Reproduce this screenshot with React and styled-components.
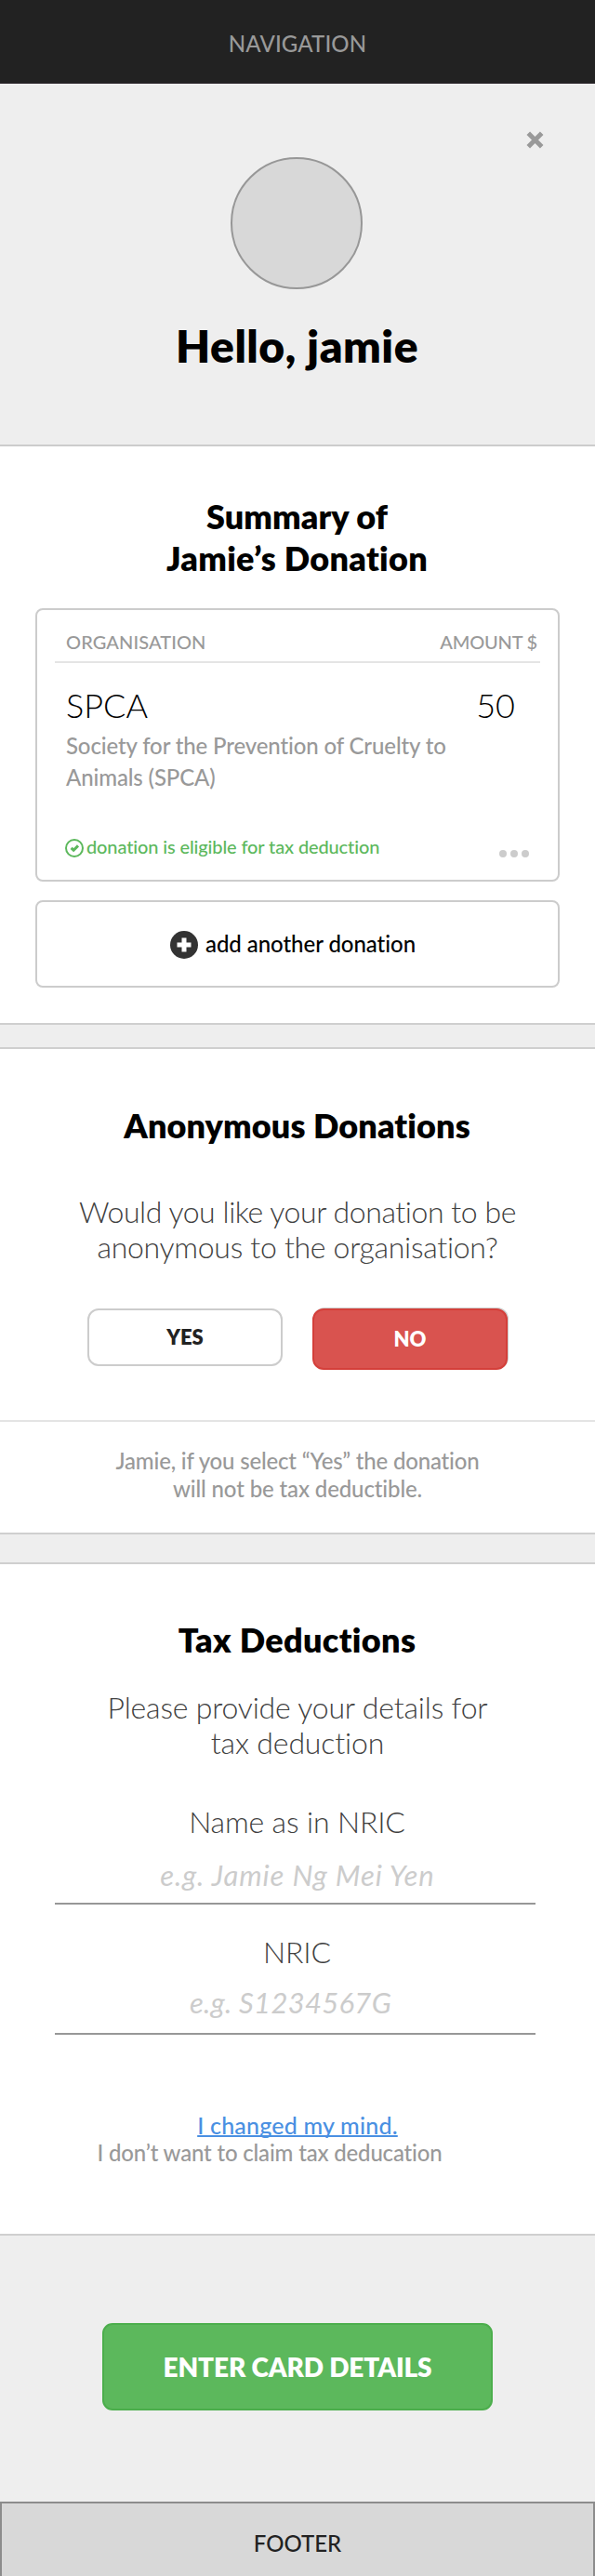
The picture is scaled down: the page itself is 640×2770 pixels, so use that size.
import React from 'react';
import styled, { createGlobalStyle } from 'styled-components';

const GlobalStyle = createGlobalStyle`
  *, *::before, *::after { box-sizing: border-box; }
  body { margin: 0; background: #eee; }
  h1, h2, p { margin: 0; }
  button { font: inherit; cursor: pointer; }
`;

const Page = styled.div`
  width: 640px;
  min-height: 2770px;
  display: flex;
  flex-direction: column;
  background: #eee;
  color: #000;
  font-family: Lato, 'Liberation Sans', sans-serif;
  font-variant-ligatures: none;
  white-space: nowrap;
`;

const Track = styled.span`
  display: block;
  letter-spacing: ${(p) => p.$by || 0}px;
`;

const NavBar = styled.nav`
  height: 90px;
  padding-top: 32px;
  background: #222;
  border-bottom: 1px solid #2a252b;
  color: #999;
  font-size: 24px;
  font-weight: 500;
  line-height: 30px;
  letter-spacing: 0.1px;
  text-align: center;
`;

const Hero = styled.header`
  position: relative;
  display: flex;
  flex-direction: column;
  align-items: center;
  height: 390px;
  padding-top: 79px;
  border-bottom: 2px solid #ccc;
`;

const CloseButton = styled.button`
  position: absolute;
  top: 51px;
  right: 55px;
  display: flex;
  padding: 0;
  border: 0;
  background: none;
`;

const Avatar = styled.div`
  width: 142px;
  height: 142px;
  margin-right: 2px;
  border: 2px solid #979797;
  border-radius: 50%;
  background: #d8d8d8;
`;

const Greeting = styled.h1`
  margin-top: 32px;
  padding-right: 1px;
  font-size: 48px;
  font-weight: 800;
  line-height: 58px;
  letter-spacing: 0.5px;
`;

const Section = styled.section`
  display: flex;
  flex-direction: column;
  align-items: center;
  padding: ${(p) => p.$pad};
  background: #fff;
`;

const Title = styled.h2`
  padding-right: 1px;
  font-size: 36px;
  font-weight: 800;
  line-height: 45px;
  text-align: center;
`;

const Band = styled.div`
  height: ${(p) => p.$height}px;
  border: solid #cfcfcf;
  border-width: 2px 0;
  background: #eee;
`;

const Card = styled.article`
  width: 564px;
  height: 294px;
  margin-top: 31px;
  padding: 22px 19px 0;
  border: 2px solid #ccc;
  border-radius: 8px;
`;

const CardHeader = styled.div`
  display: flex;
  justify-content: space-between;
  padding: 0 3px 9px 12px;
  border-bottom: 2px solid #e4e4e4;
  color: #999;
  font-size: 20px;
  font-weight: 500;
  line-height: 24px;
`;

const DonationRow = styled.div`
  display: flex;
  justify-content: space-between;
  margin-top: 23px;
  padding: 0 27px 0 12px;
  font-size: 36px;
  font-weight: 300;
  line-height: 44px;
`;

const Description = styled.p`
  margin-top: 5px;
  padding-left: 12px;
  color: #999;
  font-size: 24px;
  font-weight: 500;
  line-height: 34px;
  letter-spacing: -0.13px;
`;

const CardFooter = styled.div`
  display: flex;
  justify-content: space-between;
  align-items: flex-end;
  margin-top: 45px;
  padding: 0 12px 0 11px;
`;

const Eligibility = styled.div`
  display: flex;
  align-items: flex-end;
  gap: 3px;
  color: #5cb85c;
  font-size: 20px;
  font-weight: 500;
  line-height: 24px;
  letter-spacing: -0.13px;
`;

const More = styled.div`
  display: flex;
  gap: 4px;
`;

const Dot = styled.i`
  width: 8px;
  height: 8px;
  border-radius: 50%;
  background: #ccc;
`;

const AddButton = styled.button`
  display: flex;
  align-items: center;
  justify-content: center;
  gap: 8px;
  width: 564px;
  height: 94px;
  margin-top: 20px;
  padding: 0 10px 0 0;
  border: 2px solid #ccc;
  border-radius: 8px;
  background: #fff;
  color: #000;
  font-variant-ligatures: none;

  && {
    font-size: 24px;
    font-weight: 500;
    line-height: 30px;
    letter-spacing: -0.05px;
  }

  svg { margin-top: 2px; }
`;

const Question = styled.p`
  margin-top: ${(p) => p.$top}px;
  color: #404040;
  font-size: 32px;
  font-weight: 300;
  line-height: 38px;
  text-align: center;
`;

const Choices = styled.div`
  display: flex;
  align-items: flex-start;
  gap: 32px;
  margin-top: 47px;
`;

const Choice = styled.button`
  width: 210px;
  height: ${(p) => (p.$selected ? 66 : 62)}px;
  padding: 0;
  border: 2px solid ${(p) => (p.$selected ? '#d43f3a' : '#ccc')};
  border-radius: 12px;
  background: ${(p) => (p.$selected ? '#d9534f' : '#fff')};
  color: ${(p) => (p.$selected ? '#fff' : '#222')};
  box-shadow: ${(p) => (p.$selected ? '1px -1px 0 #ccc' : 'none')};

  && {
    font-size: 22px;
    font-weight: 800;
    line-height: 28px;
  }
`;

const Note = styled.p`
  width: 100%;
  margin-top: 54px;
  padding-top: 27px;
  border-top: 2px solid #e4e4e4;
  color: #999;
  font-size: 24px;
  font-weight: 500;
  line-height: 30px;
  text-align: center;
`;

const Field = styled.div`
  width: 517px;
  margin: ${(p) => p.$top}px 5px 0 0;
  padding-bottom: ${(p) => p.$bottom}px;
  border-bottom: 2px solid #979797;
  text-align: center;
`;

const Label = styled.div`
  padding-left: 4px;
  color: #404040;
  font-size: 32px;
  font-weight: 300;
  line-height: 38px;
  letter-spacing: -0.15px;
`;

const Hint = styled.div`
  margin-top: ${(p) => p.$top}px;
  padding: ${(p) => p.$nudge};
  color: #ccc;
  font-size: 31px;
  font-style: italic;
  line-height: 38px;
  letter-spacing: ${(p) => p.$by}px;
`;

const OptOut = styled.div`
  margin-top: 82px;
  text-align: center;
  font-size: 24px;
  font-weight: 500;
  line-height: 30px;
`;

const OptOutLink = styled.a`
  display: block;
  color: #4a90e2;
  font-size: 25px;
  letter-spacing: 0.2px;
  text-decoration: underline;
  text-decoration-thickness: 2px;
  text-underline-offset: 1px;
  text-decoration-skip-ink: none;
`;

const OptOutText = styled.p`
  padding-right: 60px;
  color: #999;
  letter-spacing: -0.18px;
`;

const Checkout = styled.div`
  display: flex;
  justify-content: center;
  height: 288px;
  padding-top: 94px;
  border-top: 2px solid #cfcfcf;
`;

const SubmitButton = styled.button`
  width: 420px;
  height: 94px;
  padding: 0;
  border: 2px solid #4cae4c;
  border-radius: 11px;
  background: #5cb85c;
  color: #fff;

  && {
    font-size: 28px;
    font-weight: 800;
    letter-spacing: -0.15px;
  }
`;

const Footer = styled.footer`
  height: 80px;
  padding-top: 28px;
  border: 2px solid #8c8c8c;
  border-bottom: 0;
  background: #d8d8d8;
  color: #222;
  font-size: 24px;
  font-weight: 500;
  line-height: 30px;
  text-align: center;
`;

const CloseIcon = () => (
  <svg width="19" height="19" viewBox="0 0 19 19" stroke="#999" strokeWidth="5">
    <path d="M2.3 2.3 16.7 16.7M16.7 2.3 2.3 16.7" />
  </svg>
);

const CheckIcon = () => (
  <svg width="20" height="20" viewBox="0 0 20 20" fill="none" stroke="#5cb85c">
    <circle cx="10" cy="10" r="9" strokeWidth="2" />
    <path d="M6.6 9.8 9.2 12.2 14 7.4" strokeWidth="3" />
  </svg>
);

const PlusIcon = () => (
  <svg width="30" height="30" viewBox="0 0 30 30">
    <circle cx="15" cy="15" r="15" fill="#333" />
    <path d="M15 7.5v15M7.5 15h15" stroke="#fff" strokeWidth="5" />
  </svg>
);

export default function App() {
  return (
    <>
      <GlobalStyle />
      <Page>
        <NavBar>NAVIGATION</NavBar>

        <Hero>
          <CloseButton aria-label="Close"><CloseIcon /></CloseButton>
          <Avatar />
          <Greeting>Hello, jamie</Greeting>
        </Hero>

        <Section $pad="53px 0 38px">
          <Title>
            <Track $by={0.1}>Summary of</Track>
            <Track $by={0.3}>Jamie’s Donation</Track>
          </Title>
          <Card>
            <CardHeader>
              <Track $by={0.1}>ORGANISATION</Track>
              <Track $by={-0.2}>AMOUNT $</Track>
            </CardHeader>
            <DonationRow>
              <span>SPCA</span>
              <span>50</span>
            </DonationRow>
            <Description>
              Society for the Prevention of Cruelty to<br />
              Animals (SPCA)
            </Description>
            <CardFooter>
              <Eligibility>
                <CheckIcon />
                donation is eligible for tax deduction
              </Eligibility>
              <More><Dot /><Dot /><Dot /></More>
            </CardFooter>
          </Card>
          <AddButton><PlusIcon />add another donation</AddButton>
        </Section>

        <Band $height={28} />

        <Section $pad="60px 0 32px">
          <Title><Track $by={0.1}>Anonymous Donations</Track></Title>
          <Question $top={51}>
            <Track $by={-0.43}>Would you like your donation to be</Track>
            <Track $by={-0.3}>anonymous to the organisation?</Track>
          </Question>
          <Choices>
            <Choice>YES</Choice>
            <Choice $selected>NO</Choice>
          </Choices>
          <Note>
            <Track $by={-0.18}>Jamie, if you select “Yes” the donation</Track>
            <Track $by={-0.13}>will not be tax deductible.</Track>
          </Note>
        </Section>

        <Band $height={34} />

        <Section $pad="59px 0 72px">
          <Title><Track $by={0.35}>Tax Deductions</Track></Title>
          <Question $top={31}>
            <Track $by={-0.18}>Please provide your details for</Track>
            <Track $by={-0.15}>tax deduction</Track>
          </Question>
          <Field $top={47} $bottom={11}>
            <Label>Name as in NRIC</Label>
            <Hint $top={19} $nudge="0 0 0 5px" $by={0.9}>e.g. Jamie Ng Mei Yen</Hint>
          </Field>
          <Field $top={32} $bottom={14}>
            <Label>NRIC</Label>
            <Hint $top={16} $nudge="0 10px 0 0" $by={0.3}>e.g. S1234567G</Hint>
          </Field>
          <OptOut>
            <OptOutLink>I changed my mind.</OptOutLink>
            <OptOutText>I don’t want to claim tax deducation</OptOutText>
          </OptOut>
        </Section>

        <Checkout>
          <SubmitButton>ENTER CARD DETAILS</SubmitButton>
        </Checkout>

        <Footer>FOOTER</Footer>
      </Page>
    </>
  );
}
